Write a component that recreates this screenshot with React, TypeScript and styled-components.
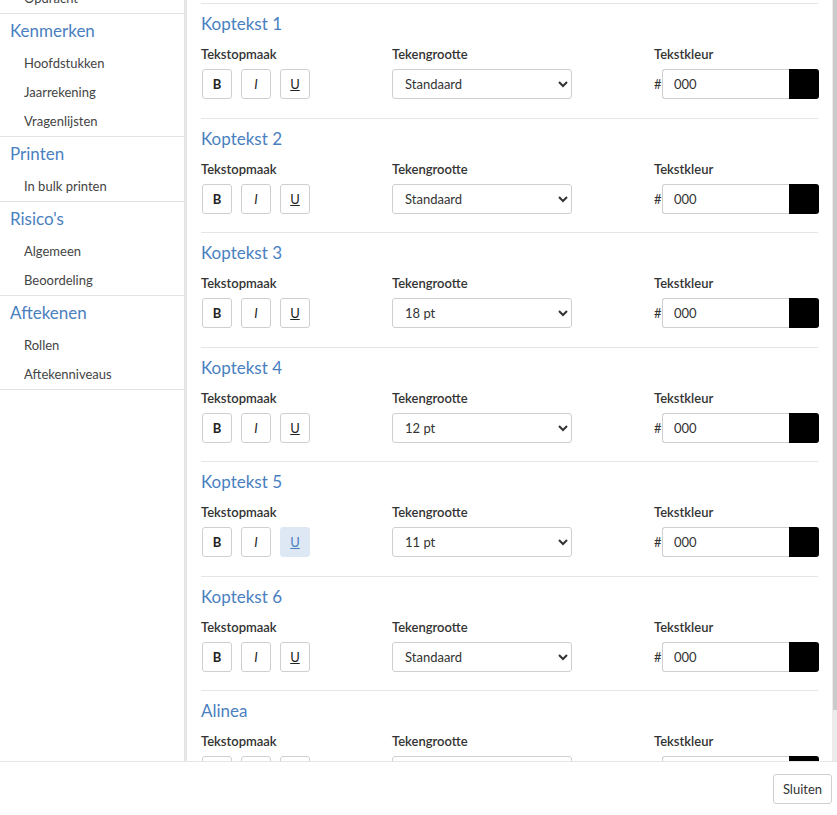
import React from "react";
import styled, { createGlobalStyle, css } from "styled-components";

const GlobalStyle = createGlobalStyle`
  html, body { margin: 0; padding: 0; background: #fff; }
  body { font-family: Lato, "Open Sans", "Liberation Sans", sans-serif; color: #333; }
  * { box-sizing: border-box; }
`;

const Shell = styled.div`
  height: 815px;
  display: flex;
  flex-direction: column;
  overflow: hidden;
`;

const Body = styled.div`
  height: 761px;
  display: flex;
  min-height: 0;
`;

const Sidebar = styled.nav`
  width: 187px;
  flex: none;
  border-right: 3px solid #e6e6e6;
  overflow: hidden;
`;

const SideList = styled.div`
  margin-top: -17px;
`;

const SideGroup = styled.div`
  border-bottom: 1px solid #e3e3e3;
  padding-bottom: 1px;
`;

const SideHeading = styled.div`
  height: 34px;
  display: flex;
  align-items: center;
  padding: 0 0 1px 10px;
  font-size: 17px;
  color: #4a7fbf;
`;

const SideItem = styled.div`
  height: 29px;
  display: flex;
  align-items: center;
  padding-left: 24px;
  font-size: 13px;
  color: #444;
`;

const ContentPane = styled.div`
  flex: 1;
  min-width: 0;
  display: flex;
`;

const Content = styled.main`
  flex: 1;
  min-width: 0;
  overflow: hidden;
  padding: 3px 14px 8px 14px;
`;

const ScrollTrack = styled.div`
  width: 5px;
  flex: none;
  background: #ececec;
  display: flex;
  flex-direction: column;
`;

const ScrollThumb = styled.div`
  width: 4px;
  margin-left: 1px;
  background: #cbcbcb;
`;

const Section = styled.section`
  border-top: 1px solid #e5e5e5;
  padding: 8px 0 18.5px;
`;

const SectionTitle = styled.h3`
  margin: 0;
  font-size: 17px;
  line-height: 24px;
  font-weight: 400;
  color: #4a7fbf;
`;

const FieldGrid = styled.div`
  margin-top: 9px;
  display: grid;
  grid-template-columns: 191px 262px 1fr;
`;

const Field = styled.div`
  display: flex;
  flex-direction: column;
  gap: 6px;
`;

const Label = styled.div`
  font-size: 13px;
  line-height: 18px;
  font-weight: 600;
  color: #333;
`;

const ButtonRow = styled.div`
  display: flex;
  gap: 9px;
  padding-left: 1px;
`;

const StyleButton = styled.button<{ $kind: "b" | "i" | "u"; $active?: boolean }>`
  width: 30px;
  height: 30px;
  padding: 0;
  border: 1px solid #cfcfcf;
  border-radius: 3px;
  background: #fff;
  font-family: Lato, "Liberation Sans", sans-serif;
  font-size: 13px;
  color: #222;
  display: flex;
  align-items: center;
  justify-content: center;
  ${(p) => p.$kind === "b" && css`font-weight: 700;`}
  ${(p) => p.$kind === "i" && css`font-style: italic;`}
  ${(p) => p.$kind === "u" && css`text-decoration: underline;`}
  ${(p) =>
    p.$active &&
    css`
      background: #dde8f4;
      border-color: #dde8f4;
      color: #4a7fbf;
    `}
`;

const Select = styled.select`
  width: 180px;
  height: 30px;
  border: 1px solid #cfcfcf;
  border-radius: 3px;
  background: #fff;
  padding: 0 8px;
  font-family: Lato, "Liberation Sans", sans-serif;
  font-size: 13px;
  color: #333;
`;

const ColorRow = styled.div`
  display: flex;
  align-items: center;
`;

const Hash = styled.span`
  width: 8px;
  font-size: 13px;
  color: #333;
`;

const HexInput = styled.input`
  width: 127px;
  height: 30px;
  border: 1px solid #cfcfcf;
  border-right: none;
  border-radius: 3px 0 0 3px;
  padding: 0 11px;
  font-family: Lato, "Liberation Sans", sans-serif;
  font-size: 13px;
  color: #333;
  outline: none;
`;

const Swatch = styled.div<{ $color: string }>`
  width: 30px;
  height: 30px;
  background: ${(p) => p.$color};
  border-radius: 0 3px 3px 0;
`;

const Footer = styled.footer`
  height: 54px;
  border-top: 1px solid #e5e5e5;
  display: flex;
  align-items: center;
  justify-content: flex-end;
  padding-right: 5px;
`;

const CloseButton = styled.button`
  height: 30px;
  padding: 0 9px;
  border: 1px solid #cfcfcf;
  border-radius: 3px;
  background: #fff;
  font-family: Lato, "Liberation Sans", sans-serif;
  font-size: 13px;
  color: #333;
`;

const sideGroups: { title?: string; items: string[] }[] = [
  { items: ["Opdracht"] },
  { title: "Kenmerken", items: ["Hoofdstukken", "Jaarrekening", "Vragenlijsten"] },
  { title: "Printen", items: ["In bulk printen"] },
  { title: "Risico's", items: ["Algemeen", "Beoordeling"] },
  { title: "Aftekenen", items: ["Rollen", "Aftekenniveaus"] },
];

const sizes = ["Standaard", "8 pt", "9 pt", "10 pt", "11 pt", "12 pt", "14 pt", "16 pt", "18 pt", "20 pt", "24 pt"];

const sections: { title: string; size: string; underline?: boolean }[] = [
  { title: "Koptekst 1", size: "Standaard" },
  { title: "Koptekst 2", size: "Standaard" },
  { title: "Koptekst 3", size: "18 pt" },
  { title: "Koptekst 4", size: "12 pt" },
  { title: "Koptekst 5", size: "11 pt", underline: true },
  { title: "Koptekst 6", size: "Standaard" },
  { title: "Alinea", size: "Standaard" },
];

const visibleRatio = 710 / 761;

export default function App() {
  return (
    <Shell>
      <GlobalStyle />
      <Body>
        <Sidebar>
          <SideList>
            {sideGroups.map((g, i) => (
              <SideGroup key={i}>
                {g.title && <SideHeading>{g.title}</SideHeading>}
                {g.items.map((it) => (
                  <SideItem key={it}>{it}</SideItem>
                ))}
              </SideGroup>
            ))}
          </SideList>
        </Sidebar>
        <ContentPane>
          <Content>
            {sections.map((s) => (
              <Section key={s.title}>
                <SectionTitle>{s.title}</SectionTitle>
                <FieldGrid>
                  <Field>
                    <Label>Tekstopmaak</Label>
                    <ButtonRow>
                      <StyleButton $kind="b">B</StyleButton>
                      <StyleButton $kind="i">I</StyleButton>
                      <StyleButton $kind="u" $active={s.underline}>U</StyleButton>
                    </ButtonRow>
                  </Field>
                  <Field>
                    <Label>Tekengrootte</Label>
                    <Select defaultValue={s.size}>
                      {sizes.map((z) => (
                        <option key={z} value={z}>{z}</option>
                      ))}
                    </Select>
                  </Field>
                  <Field>
                    <Label>Tekstkleur</Label>
                    <ColorRow>
                      <Hash>#</Hash>
                      <HexInput defaultValue="000" />
                      <Swatch $color="#000" />
                    </ColorRow>
                  </Field>
                </FieldGrid>
              </Section>
            ))}
          </Content>
          <ScrollTrack>
            <ScrollThumb style={{ height: `${visibleRatio * 100}%` }} />
          </ScrollTrack>
        </ContentPane>
      </Body>
      <Footer>
        <CloseButton>Sluiten</CloseButton>
      </Footer>
    </Shell>
  );
}
